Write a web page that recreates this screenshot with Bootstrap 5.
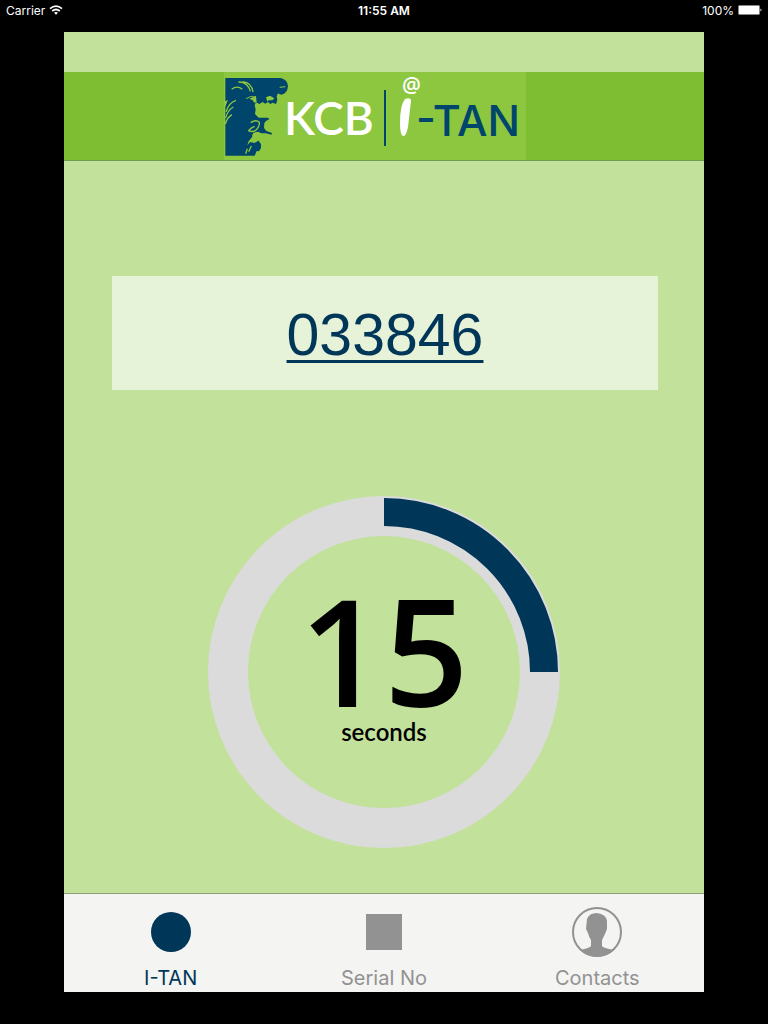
<!DOCTYPE html>
<html lang="en">
<head>
<meta charset="utf-8">
<meta name="viewport" content="width=device-width, initial-scale=1">
<title>KCB i-TAN</title>
<link href="https://cdn.jsdelivr.net/npm/bootstrap@5.3.0/dist/css/bootstrap.min.css" rel="stylesheet">
<style>
:root { --navy: #003658; --leaf: #c2e19b; --muted: #929292; }
body { background: #000; font-family: Inter, "Liberation Sans", sans-serif; }
.status-bar { height: 32px; padding: 4px 6px; font-size: 12px; line-height: 13px; }
.app-frame { background: var(--leaf); margin: 0 64px 32px; }
.brand-bar { background: #7dbe33; margin-top: 40px; padding-right: 18px; border-bottom: 1px solid #6f9b4b; }
.brand-logo { width: 302px; height: 88px; }
.code-panel { background: #e6f3d8; margin: 115px 46px 0 48px; height: 114px; padding-top: 4px; }
.code-link { color: var(--navy); font: 59px/68px "Liberation Sans", sans-serif; text-decoration-thickness: 3px; text-underline-offset: 5px; text-decoration-skip-ink: none; }
.code-link:hover { color: var(--navy); }
.countdown { width: 352px; height: 352px; margin: 106px auto 43px; display: grid; }
.countdown > * { grid-area: 1 / 1; }
.count-text { color: #000; text-align: center; padding-top: 82px; }
.count-value { font: 600 148px/144px "Open Sans", sans-serif; }
.count-unit { font: 600 24px/20px Lato, sans-serif; }
.tab-bar { background: #f4f4f2; border-top: 1px solid #8c9f78; padding-bottom: 2px; }
.tab-item { color: var(--muted); font-size: 20px; line-height: 24px; padding-top: 12px; text-decoration: none; }
.tab-item.active { color: var(--navy); }
.tab-item svg { width: 52px; height: 52px; margin-bottom: 8px; }
</style>
</head>
<body>
<div class="min-vh-100 d-flex flex-column">
  <header class="status-bar text-white row g-0">
    <div class="col d-flex gap-1"><span>Carrier</span>
      <svg width="14" height="12" viewBox="0 0 14 12" fill="none" stroke="#fff" stroke-width="1.7" aria-hidden="true"><path d="M1 4.6Q7-.4 13 4.6M3.2 7Q7 4 10.8 7"/><path d="M5 8.7Q7 7.3 9 8.7L7 10.8Z" fill="#fff" stroke="none"/></svg>
    </div>
    <div class="col text-center fw-semibold">11:55 AM</div>
    <div class="col d-flex justify-content-end gap-1"><span>100%</span>
      <svg width="24" height="12" viewBox="0 0 24 12" aria-hidden="true"><rect x=".5" y="1.5" width="21" height="9" rx="1" fill="#fff" stroke="#888"/><path d="M22.5 4.5q2 1.5 0 3z" fill="#fff"/></svg>
    </div>
  </header>

  <main class="app-frame flex-grow-1 d-flex flex-column">
    <div class="brand-bar d-flex justify-content-center">
      <svg class="brand-logo" viewBox="0 0 302 88" role="img" aria-label="KCB i-TAN">
        <rect width="302" height="88" fill="#8dc63f"/>
        <g transform="scale(.33333) translate(-12 -12)">
          <path fill="#00456b" d="M16 30H182Q204 36 204 55Q202 77 184 80Q176 79 174 76L170 85L172 96L168 108L158 104L151 108L144 102L136 107L128 102L118 108L108 103L104 112L107 124L105 138L116 149H144L148 153L138 159L133 165L132 180L139 189L156 195L154 200L138 196L124 196L114 191L100 194L96 204L104 214L116 218L123 229V240L117 250L110 249L104 263H16Z"/>
          <g fill="none" stroke="#8dc63f" stroke-width="4">
            <path d="M55 42Q83 41 91 70M68 41Q95 44 99 72M35 64Q51 51 67 64"/>
            <path d="M48 97Q26 104 18 132M40 117Q23 127 17 150M36 140Q21 149 16 168"/>
            <path stroke-width="3" d="M78 92Q90 82 108 87M179 58L196 56"/>
            <path d="M92 164Q108 153 118 163Q119 177 106 188Q95 193 86 188Q92 179 104 175"/>
            <path d="M82 242L77 257M94 234L86 251"/>
          </g>
          <g fill="#8dc63f">
            <path d="M88 92L108 84L110 103L103 104L98 97ZM138 88L150 83L163 91L157 97L146 97L142 101ZM15 100L24 96L15 118Z"/>
            <path d="M86 220L98 205L116 218L103 225L91 222L82 231Z"/>
          </g>
        </g>
        <text x="60" y="63" font-family="Lato, sans-serif" font-size="46" font-weight="600" fill="#fff">KCB</text>
        <path d="M161 18V74" stroke="#00456b" stroke-width="2"/>
        <text x="178" y="21" font-family="Open Sans, sans-serif" font-size="21" font-weight="600" fill="#fff">@</text>
        <path d="M181 27Q187 25 187 29L184 55Q182 65 179 64Q176 63 176 51Q176 33 181 27Z" fill="#fff"/>
        <text x="192" y="64" font-family="Inter, sans-serif" font-size="43" font-weight="500" fill="#00456b">-TAN</text>
      </svg>
    </div>

    <div class="code-panel d-flex align-items-center justify-content-center"><a class="code-link" href="#code">033846</a></div>

    <div class="countdown">
      <svg viewBox="0 0 352 352" fill="none" aria-hidden="true"><circle cx="176" cy="176" r="156" stroke="#dbdbdb" stroke-width="40"/><path d="M176 16A160 160 0 0 1 336 176" stroke="#003658" stroke-width="28"/></svg>
      <div class="count-text"><div class="count-value">15</div><div class="count-unit">seconds</div></div>
    </div>

    <nav class="tab-bar row g-0 mt-auto text-center">
      <a class="tab-item active col d-flex flex-column align-items-center" href="#itan" aria-current="page"><svg viewBox="0 0 52 52"><circle cx="26" cy="26" r="20" fill="currentColor"/></svg>I-TAN</a>
      <a class="tab-item col d-flex flex-column align-items-center" href="#serial"><svg viewBox="0 0 52 52"><path d="M8 8h36v36H8z" fill="currentColor"/></svg>Serial No</a>
      <a class="tab-item col d-flex flex-column align-items-center" href="#contacts"><svg viewBox="0 0 52 52"><circle cx="26" cy="26" r="24" fill="none" stroke="currentColor" stroke-width="2"/><path d="M9 44Q19 42 20 40V34Q18 31 17 27L15 23L16 13Q18 7 26 7Q35 8 36 15V23L34 28L31 34V40Q32 42 43 44Q35 51 26 51Q17 51 9 44Z" fill="currentColor"/></svg>Contacts</a>
    </nav>
  </main>
</div>
<script src="https://cdn.jsdelivr.net/npm/bootstrap@5.3.0/dist/js/bootstrap.bundle.min.js"></script>
</body>
</html>
